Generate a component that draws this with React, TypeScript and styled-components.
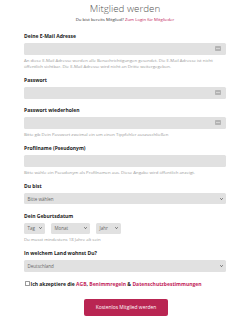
import React from "react";
import styled, { createGlobalStyle } from "styled-components";

const GlobalStyle = createGlobalStyle`
  html, body {
    margin: 0;
    padding: 0;
    background: #ffffff;
  }
  body {
    font-family: "Open Sans", "Liberation Sans", sans-serif;
    color: #222;
  }
`;

const Page = styled.div`
  width: 202px;
  margin: 0 auto;
  padding-top: 3px;
`;

const Title = styled.h1`
  margin: 0;
  font-size: 9.8px;
  line-height: 12px;
  font-weight: 300;
  color: #555;
  text-align: center;
`;

const Subtitle = styled.p`
  margin: 1px 0 11px;
  font-size: 4.3px;
  line-height: 6px;
  color: #333;
  text-align: center;
`;

const Link = styled.a`
  color: #c2245a;
  text-decoration: none;
`;

const Field = styled.div`
  margin-bottom: 8.6px;
`;

const Label = styled.label`
  display: block;
  font-size: 5px;
  line-height: 6px;
  font-weight: 700;
  color: #222;
  margin-bottom: 4px;
`;

const InputBox = styled.div`
  display: flex;
  align-items: center;
  height: 11.5px;
  background: #e1e1e1;
  border-radius: 1.5px;
  padding: 0 5px 0 3px;
`;

const Input = styled.input`
  flex: 1;
  min-width: 0;
  border: 0;
  outline: 0;
  background: transparent;
  padding: 0;
  font: inherit;
  font-size: 4.5px;
`;

const Help = styled.p`
  margin: 2px 0 0;
  font-size: 4.3px;
  line-height: 6px;
  color: #999;
`;

const SelectBox = styled.div<{ $width?: number; $height?: number }>`
  display: flex;
  align-items: center;
  justify-content: space-between;
  height: ${(p) => p.$height ?? 10.6}px;
  width: ${(p) => (p.$width ? `${p.$width}px` : "auto")};
  background: #e1e1e1;
  border-radius: 1.5px;
  padding: 0 3px 0 3.5px;
  box-sizing: border-box;
  font-size: 4.5px;
  color: #666;
`;

const DateRow = styled.div`
  display: flex;
  gap: 6px;
`;

const Terms = styled.div`
  display: flex;
  align-items: center;
  padding-left: 1px;
  font-size: 5px;
  line-height: 6px;
  font-weight: 700;
  color: #222;
`;

const Box = styled.span`
  width: 3px;
  height: 3px;
  border: 0.5px solid #999;
  border-radius: 0.5px;
  margin-right: 0.5px;
  background: #fff;
`;

const ButtonRow = styled.div`
  display: flex;
  justify-content: center;
  margin-top: 12px;
  padding-left: 2px;
`;

const Button = styled.button`
  width: 84px;
  height: 17px;
  border: 0;
  border-radius: 2px;
  background: #b92552;
  color: #fff;
  font-family: inherit;
  font-size: 4.9px;
  padding: 0;
`;

function KeyIcon() {
  return (
    <svg width="6" height="5" viewBox="0 0 6 5">
      <rect x="0" y="0" width="6" height="5" rx="0.8" fill="#b4b4b4" />
      <rect x="1" y="2.2" width="4" height="0.6" fill="#e8e8e8" />
    </svg>
  );
}

function Chevron() {
  return (
    <svg width="3" height="2" viewBox="0 0 3 2">
      <path d="M0.3 0.3 L1.5 1.6 L2.7 0.3" stroke="#333" strokeWidth="0.7" fill="none" />
    </svg>
  );
}

function TextField({ label, help, icon }: { label: string; help?: string; icon?: boolean }) {
  return (
    <Field>
      <Label>{label}</Label>
      <InputBox>
        <Input />
        {icon && <KeyIcon />}
      </InputBox>
      {help && <Help>{help}</Help>}
    </Field>
  );
}

export default function App() {
  return (
    <Page>
      <GlobalStyle />
      <Title>Mitglied werden</Title>
      <Subtitle>
        Du bist bereits Mitglied? <Link href="#">Zum Login für Mitglieder</Link>
      </Subtitle>

      <TextField
        label="Deine E-Mail Adresse"
        icon
        help="An diese E-Mail Adresse werden alle Benachrichtigungen gesendet. Die E-Mail Adresse ist nicht öffentlich sichtbar. Die E-Mail Adresse wird nicht an Dritte weitergegeben."
      />
      <TextField label="Passwort" icon />
      <TextField
        label="Passwort wiederholen"
        icon
        help="Bitte gib Dein Passwort zweimal ein um einen Tippfehler auszuschließen"
      />
      <TextField
        label="Profilname (Pseudonym)"
        help="Bitte wähle ein Pseudonym als Profilnamen aus. Diese Angabe wird öffentlich anzeigt."
      />

      <Field>
        <Label>Du bist</Label>
        <SelectBox>
          <span>Bitte wählen</span>
          <Chevron />
        </SelectBox>
      </Field>

      <Field>
        <Label>Dein Geburtsdatum</Label>
        <DateRow>
          <SelectBox $width={21} $height={11.3}>
            <span>Tag</span>
            <Chevron />
          </SelectBox>
          <SelectBox $width={39} $height={11.3}>
            <span>Monat</span>
            <Chevron />
          </SelectBox>
          <SelectBox $width={25} $height={11.3}>
            <span>Jahr</span>
            <Chevron />
          </SelectBox>
        </DateRow>
        <Help>Du musst mindestens 18 Jahre alt sein</Help>
      </Field>

      <Field>
        <Label>In welchem Land wohnst Du?</Label>
        <SelectBox $height={11.7}>
          <span>Deutschland</span>
          <Chevron />
        </SelectBox>
      </Field>

      <Terms>
        <Box />
        Ich akzeptiere die&nbsp;<Link href="#">AGB</Link>,&nbsp;
        <Link href="#">Benimmregeln</Link>&nbsp;&amp;&nbsp;
        <Link href="#">Datenschutzbestimmungen</Link>
      </Terms>

      <ButtonRow>
        <Button>Kostenlos Mitglied werden</Button>
      </ButtonRow>
    </Page>
  );
}
